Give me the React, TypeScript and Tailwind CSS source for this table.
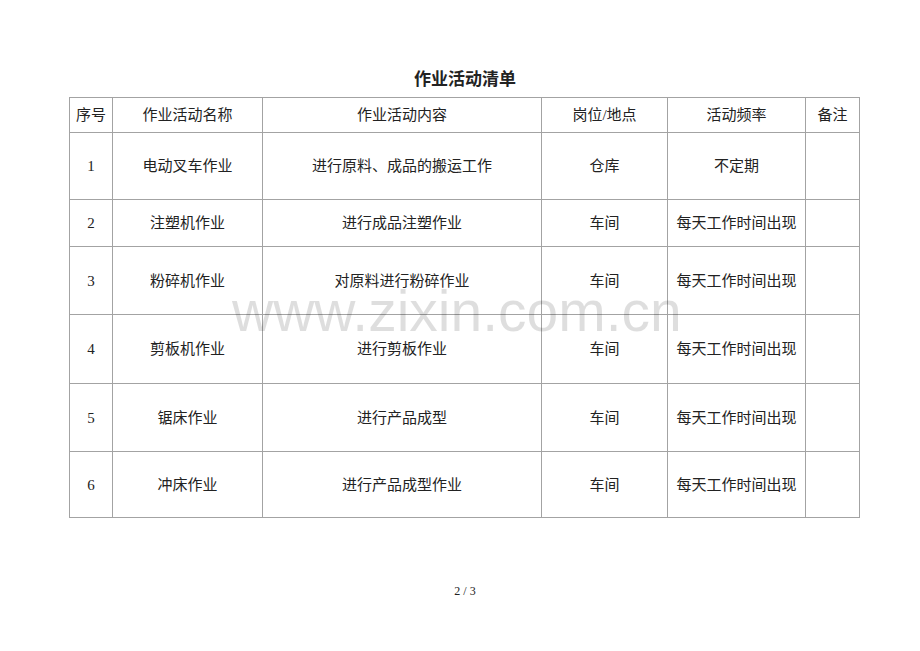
import React from "react";

const rows = [
  { no: "1", name: "电动叉车作业", content: "进行原料、成品的搬运工作", place: "仓库", freq: "不定期", h: "h-[67px]" },
  { no: "2", name: "注塑机作业", content: "进行成品注塑作业", place: "车间", freq: "每天工作时间出现", h: "h-[47px]" },
  { no: "3", name: "粉碎机作业", content: "对原料进行粉碎作业", place: "车间", freq: "每天工作时间出现", h: "h-[68px]" },
  { no: "4", name: "剪板机作业", content: "进行剪板作业", place: "车间", freq: "每天工作时间出现", h: "h-[69px]" },
  { no: "5", name: "锯床作业", content: "进行产品成型", place: "车间", freq: "每天工作时间出现", h: "h-[68px]" },
  { no: "6", name: "冲床作业", content: "进行产品成型作业", place: "车间", freq: "每天工作时间出现", h: "h-[66px]" },
];

export default function App() {
  const td = "border border-[#a3a3a3] text-center align-middle p-0";
  return (
    <div
      className="relative w-[920px] h-[651px] bg-white text-[#222222] overflow-hidden"
      style={{ fontFamily: '"Liberation Serif", "Noto Sans CJK SC", serif' }}
    >
      <div className="pt-[70px] h-[97px]">
        <div className="text-center text-[17px] leading-[20px] font-bold pl-[10px]">作业活动清单</div>
      </div>
      <table className="ml-[69px] w-[790px] table-fixed border-collapse text-[15px] leading-[20px]">
        <colgroup>
          <col className="w-[43px]" />
          <col className="w-[150px]" />
          <col className="w-[279px]" />
          <col className="w-[126px]" />
          <col className="w-[138px]" />
          <col className="w-[54px]" />
        </colgroup>
        <tbody>
          <tr className="h-[35px]">
            <td className={td}>序号</td>
            <td className={td}>作业活动名称</td>
            <td className={td}>作业活动内容</td>
            <td className={td}>岗位/地点</td>
            <td className={td}>活动频率</td>
            <td className={td}>备注</td>
          </tr>
          {rows.map((r) => (
            <tr key={r.no} className={r.h}>
              <td className={td}>{r.no}</td>
              <td className={td}>{r.name}</td>
              <td className={td}>{r.content}</td>
              <td className={td}>{r.place}</td>
              <td className={td}>{r.freq}</td>
              <td className={td}></td>
            </tr>
          ))}
        </tbody>
      </table>
      <div className="mt-[66px] text-center text-[12px] leading-[14px] pl-[10px]">2 / 3</div>
      <div
        aria-hidden="true"
        className="pointer-events-none absolute left-[232px] top-[281px] text-[57px] leading-[60px] text-black/[0.13] whitespace-nowrap"
        style={{ fontFamily: '"Liberation Sans", Arial, sans-serif' }}
      >
        www.zixin.com.cn
      </div>
    </div>
  );
}
